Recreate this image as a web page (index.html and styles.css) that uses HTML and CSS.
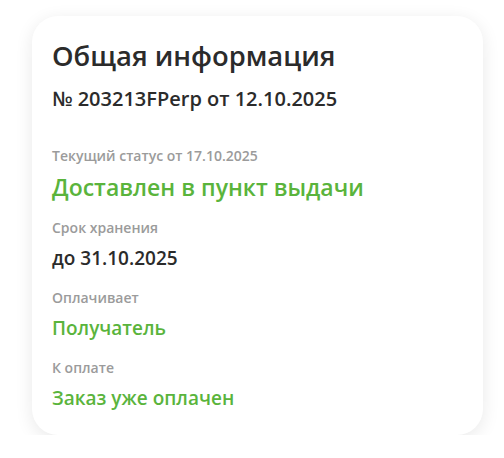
FILE: index.html
```html
<!DOCTYPE html>
<html lang="ru">
<head>
<meta charset="utf-8">
<link rel="stylesheet" href="styles.css">
</head>
<body>
<div class="card">
  <h1 class="title">Общая информация</h1>
  <div class="order">№ 203213FPerp от 12.10.2025</div>
  <div class="fields">
    <div class="field">
      <div class="label">Текущий статус от 17.10.2025</div>
      <div class="value green big">Доставлен в пункт выдачи</div>
    </div>
    <div class="field">
      <div class="label">Срок хранения</div>
      <div class="value">до 31.10.2025</div>
    </div>
    <div class="field">
      <div class="label">Оплачивает</div>
      <div class="value green">Получатель</div>
    </div>
    <div class="field">
      <div class="label">К оплате</div>
      <div class="value green">Заказ уже оплачен</div>
    </div>
  </div>
</div>
</body>
</html>
```
FILE: styles.css
```css
html, body { margin: 0; padding: 0; background: #fff; }
body {
  font-family: "Open Sans", "Liberation Sans", sans-serif;
  padding: 16px 21px 0 32px;
}
.card {
  width: 451px;
  height: 419px;
  box-sizing: border-box;
  background: #fff;
  border-radius: 26px;
  box-shadow: 0 4px 18px rgba(0,0,0,0.09);
  padding: 23px 20px 0 20px;
}
.title {
  margin: 0;
  font-size: 27.4px;
  font-weight: 600;
  color: #2b2b2b;
  line-height: 34px;
}
.order {
  margin-top: 13px;
  font-size: 20px;
  font-weight: 600;
  color: #2b2b2b;
  line-height: 26px;
}
.fields {
  margin-top: 35px;
  display: flex;
  flex-direction: column;
  gap: 18px;
}
.label {
  font-size: 14px;
  font-weight: 600;
  color: #9b9b9b;
  line-height: 18px;
}
.value {
  margin-top: 8px;
  font-size: 19px;
  font-weight: 600;
  color: #2b2b2b;
  line-height: 26px;
}
.value.big { font-size: 23px; line-height: 28px; }
.green { color: #5ab43c; }
```
